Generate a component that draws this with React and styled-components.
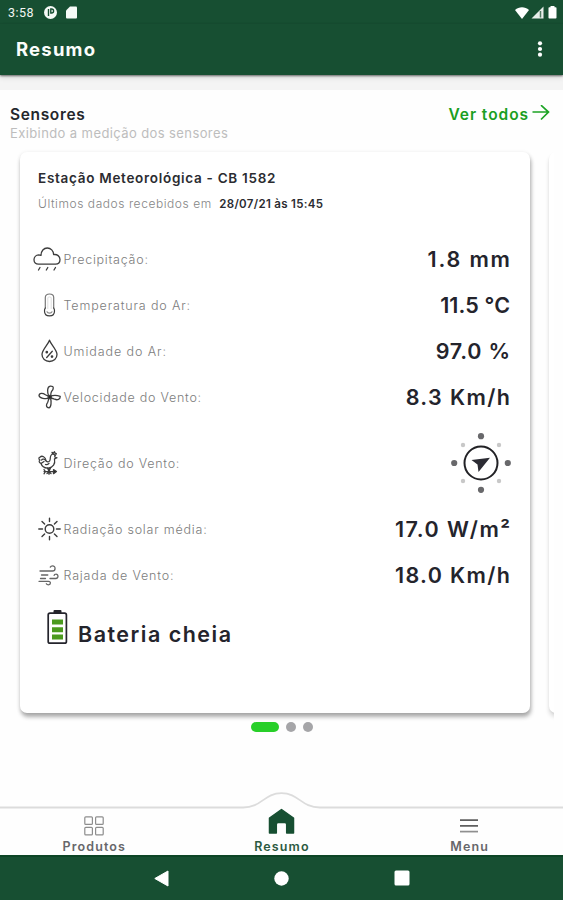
import React from 'react';
import styled, { createGlobalStyle } from 'styled-components';

const GlobalStyle = createGlobalStyle`
  * { box-sizing: border-box; }
  body { margin: 0; background: #fefefe; font-family: Inter, sans-serif; }
  svg { display: block; flex: none; }
`;

const GREEN = '#174f32';

const Screen = styled.div`
  width: 563px;
  height: 900px;
  display: flex;
  flex-direction: column;
  overflow: hidden;
  background: #fefefe;
`;

const StatusBar = styled.div`
  height: 24px;
  flex: none;
  display: flex;
  align-items: center;
  padding: 1px 5px 0 8px;
  background: ${GREEN};
`;

const Clock = styled.span`
  width: 36px;
  color: #f3f7f4;
  font: 400 12.5px/16px Roboto, sans-serif;
  letter-spacing: 0.5px;
`;

const StatusIcons = styled.div`
  display: flex;
  align-items: center;
  gap: ${(p) => p.$gap}px;
  margin-left: ${(p) => (p.$end ? 'auto' : 0)};
`;

const AppBar = styled.header`
  height: 51px;
  flex: none;
  display: flex;
  align-items: center;
  justify-content: space-between;
  padding: 0 20px 1px 16px;
  background: ${GREEN};
  position: relative;
  box-shadow: 0 1px 2px rgba(0, 0, 0, 0.55), 0 3px 5px rgba(0, 0, 0, 0.1);
`;

const PageTitle = styled.h1`
  margin: 0;
  color: #fbfdfb;
  font-size: 18.5px;
  font-weight: 700;
  letter-spacing: 1.2px;
`;

const Strip = styled.div`
  height: 15px;
  flex: none;
  background: #f4f4f4;
`;

const SectionHeader = styled.div`
  display: flex;
  justify-content: space-between;
  height: 55px;
  padding: 15px 13px 0 10px;
`;

const SectionTitle = styled.h2`
  margin: 0;
  color: #25272c;
  font-size: 15.5px;
  line-height: 20px;
  font-weight: 600;
  letter-spacing: 0.65px;
`;

const SectionHint = styled.p`
  margin: 0;
  color: #bdbdbd;
  font-size: 13px;
  line-height: 17px;
  letter-spacing: 0.4px;
`;

const SeeAll = styled.a`
  display: flex;
  align-items: flex-start;
  gap: 3px;
  height: 20px;
  color: #1a9e22;
  font-size: 15.5px;
  line-height: 20px;
  font-weight: 600;
  letter-spacing: 0.95px;
`;

const Carousel = styled.div`
  display: flex;
  gap: 19.5px;
  height: 577px;
  flex: none;
  margin: 0 9px 0 10px;
  padding: 6.5px 0 0 10px;
  overflow: hidden;
`;

const Card = styled.article`
  width: 509.5px;
  height: 561px;
  flex: none;
  display: flex;
  flex-direction: column;
  padding: 16.5px 19.5px 0 13px;
  background: #fff;
  border-radius: 7px;
  box-shadow: ${(p) =>
    p.$peek
      ? '0 4px 4px rgba(0, 0, 0, 0.14), 0 1px 2px rgba(0, 0, 0, 0.05)'
      : '1px 4px 4px rgba(0, 0, 0, 0.3), 0 1px 4px rgba(0, 0, 0, 0.1)'};
`;

const StationName = styled.h3`
  margin: 0 0 7px 5px;
  color: #2b2c31;
  font-size: 13.5px;
  line-height: 20px;
  font-weight: 600;
  letter-spacing: 0.71px;
  white-space: nowrap;
`;

const Updated = styled.p`
  display: flex;
  gap: 7.5px;
  height: 18px;
  margin: 0 0 23px 5px;
  color: #858585;
  font-size: 12px;
  line-height: 18px;
  font-weight: 300;
  letter-spacing: 0.56px;
`;

const UpdatedAt = styled.strong`
  color: #2b2c31;
  font-size: 11.5px;
  font-weight: 600;
  letter-spacing: 0.32px;
`;

const Reading = styled.div`
  display: flex;
  align-items: center;
  height: ${(p) => (p.$tall ? 86 : 46)}px;
`;

const IconSlot = styled.div`
  width: 30.5px;
  flex: none;
  display: flex;
  justify-content: flex-end;
  padding-right: ${(p) => p.$pad}px;
`;

const Label = styled.span`
  color: #7c7c7c;
  font-size: 12.5px;
  font-weight: 300;
  letter-spacing: ${(p) => p.$track}px;
`;

const Value = styled.span`
  margin-left: auto;
  margin-right: ${(p) => -p.$track}px;
  color: #24242c;
  font-size: 21.5px;
  font-weight: 600;
  letter-spacing: ${(p) => p.$track}px;
`;

const CompassSlot = styled.div`
  margin: 0 -1.5px 0 auto;
`;

const Battery = styled.div`
  display: flex;
  align-items: flex-start;
  gap: 10px;
  padding: 12px 0 0 14px;
`;

const BatteryText = styled.span`
  padding-top: 9.5px;
  color: #24242c;
  font-size: 21.5px;
  line-height: 28px;
  font-weight: 600;
  letter-spacing: 1.49px;
`;

const Pager = styled.div`
  display: flex;
  justify-content: center;
  align-items: center;
  gap: 7.5px;
  height: 10px;
`;

const Dot = styled.span`
  width: ${(p) => (p.$active ? 28 : 9.5)}px;
  height: 9.5px;
  border-radius: 5px;
  background: ${(p) => (p.$active ? '#28cf29' : '#a5a5a8')};
`;

const TabBar = styled.nav`
  position: relative;
  height: 49px;
  flex: none;
  display: grid;
  grid-template-columns: repeat(3, 1fr);
  margin-top: auto;
  background: #fefefe;
`;

const TabOutline = styled.svg`
  position: absolute;
  left: 0;
  top: -16px;
`;

const Tab = styled.div`
  position: relative;
  display: flex;
  flex-direction: column;
  align-items: center;
  justify-content: flex-end;
  gap: ${(p) => p.$gap}px;
`;

const TabLabel = styled.span`
  color: ${(p) => (p.$active ? '#2c5a41' : '#67676a')};
  font-size: 12.5px;
  line-height: 16px;
  font-weight: 600;
  letter-spacing: 1.12px;
  margin-right: -1px;
`;

const SystemBar = styled.div`
  height: 45px;
  flex: none;
  display: flex;
  justify-content: center;
  align-items: center;
  gap: 104.5px;
  padding-bottom: 1px;
  background: ${GREEN};
  border-top: 2px solid #0d4526;
`;

const line = { fill: 'none', stroke: '#3c3c3c', strokeLinecap: 'round', strokeLinejoin: 'round' };

const RainIcon = () => (
  <svg width="28" height="24" viewBox="0 0 28 24" {...line} strokeWidth="1.3">
    <path d="M5.500 17.200C2.800 17.200 1 15.400 1 12.800c0-2.700 2-4.800 4.700-4.900.9 0 1.700.2 2.300.5C8 4 10.800 1 14.300 1s6.300 2.800 6.300 6.600c3.600-.6 6.400 1.700 6.400 4.900 0 2.800-1.900 4.700-4.500 4.700z" />
    <path d="m7 20.500-1.500 2.500M14.800 20.500 13.300 23M22.500 20.500 21 23" />
  </svg>
);

const ThermometerIcon = () => (
  <svg width="13" height="24" viewBox="0 0 13 24" {...line} strokeWidth="1.200">
    <path d="M2.300 15V4.500C2.300 2.200 4 1 6.500 1s4.200 1.200 4.200 3.500V15" stroke="#777" />
    <path d="M2.300 15a5.200 5.200 0 0 0-.8 3c0 3 2 4.900 5 4.900s5-1.900 5-4.900a5.200 5.200 0 0 0-.8-3" />
    <path d="M4.800 15.500V4.800c0-1.200 3.400-1.200 3.400 0v10.700" stroke="#c8c8c8" strokeWidth=".6" />
    <path d="M4 18.800c.8 1.700 4.200 1.700 5 0" stroke="#888" />
  </svg>
);

const DropIcon = () => (
  <svg width="17" height="24" viewBox="0 0 17 24" {...line} strokeWidth="1.300">
    <path d="M8.500 1.200C7 5.800 1 10.800 1 15.600c0 4 3.300 6.900 7.500 6.900s7.500-2.900 7.500-6.900c0-4.800-6-9.800-7.500-14.400z" />
    <path d="m11.300 12.300-5.600 6.200" />
    <circle cx="5.800" cy="13.200" r=".7" />
    <circle cx="11" cy="17.600" r=".7" />
  </svg>
);

const FanIcon = () => (
  <svg width="23" height="24" viewBox="0 0 23 24" {...line} strokeWidth="1.300">
    <path d="M10.800 11.500C9.200 7.500 8.800 1.600 12.300 1.100c4.200-.3 3.300 3.400 1.200 5.400-.8 1.500-.8 3-.8 4.500" />
    <path d="M12.300 11.200c3-1 7-.9 9.900.2.200 2.800-2.800 4.100-5.500 2.800-1.300-.7-2.500-1-4.200-1.200" />
    <path d="M12.600 13c.8 3.500.8 9-1.500 9.800-3.500-.2-3-3.500-1.400-5.500.7-1.500.8-2.800 1-4.300" />
    <path d="M11 13.200C7.500 14 1.500 13.500 1 10.700 1.200 7.500 5 7.900 7 9.500c1.200.9 2.500 1.300 4 1.500" />
    <circle cx="11.700" cy="12.100" r="1.700" fill="#222" />
  </svg>
);

const RoosterIcon = () => (
  <svg width="20" height="24" viewBox="0 0 20 24" {...line} strokeWidth="1.250">
    <path d="M8 9.500C7.500 6 4 4.200 2.200 6 .5 6 .5 8.500 2 9c-1.500 1-.8 3 .8 3 1.300 4 4.700 5.300 7.700 5 4.500-.5 7-4 6-9" />
    <path d="M3.500 9C5 7 7 8.500 8 10c1.800 1.500 4 1 4.200-1.700 0-2.800.3-5 2.800-5.300 1.500 0 2.200 1.200 1.700 3L19 6.800 16.500 8M14.500 2.800l-.5-1.500 1.500.7 1-1.300.6 1.500 1.200.5-1 1.800" />
    <path d="M3 12.500 6 10.500M7.500 13.500c1.500.5 2.700-.3 3.500-1.200M9.500 17l1.500 3.500L12.500 17M11 17v6.300M6 20.500h10.500M6 18.500l1.500 2L6 22.800M9 22.500l2-1.500 2 1.500" />
    <path d="m15.500 18.500 3 2-3 2.200z" fill="#222" />
  </svg>
);

const SunIcon = () => (
  <svg width="23" height="24" viewBox="0 0 23 24" {...line} strokeWidth="1.400">
    <circle cx="11.500" cy="12" r="4.300" />
    <path d="M11.500 1.200v3.300M11.500 19.500v3.300M.8 12h3.700M18.500 12h3.700M4 4.500l2.600 2.600M16.400 16.900l2.600 2.600M19 4.500l-2.600 2.600M6.600 16.900 4 19.500" />
  </svg>
);

const GustIcon = () => (
  <svg width="21" height="22" viewBox="0 0 21 22" {...line} stroke="#666" strokeWidth="1.300">
    <path d="M2 7h12.500c3.300 0 3.500-5.200 0-5.200-1.200 0-1.800.5-2.200 1.300" />
    <path d="M3.500 11h6.300M12 14.500h5.800c3 0 2.800-4.600 0-4.400-1 0-1.500.5-1.700 1.300M2.500 14.500h5" />
    <path d="M1 17.300h9.500c2.600 0 2.500 3.600 0 3.600-1.200 0-1.800-.4-2.200-1.100" />
  </svg>
);

const CompassIcon = () => (
  <svg width="62" height="62" viewBox="0 0 62 62">
    <circle cx="31" cy="31" r="16.500" fill="none" stroke="#222226" strokeWidth="2" />
    <g fill="#68686b">
      <circle cx="31" cy="4.200" r="3.100" />
      <circle cx="31" cy="57.800" r="3.100" />
      <circle cx="4.200" cy="31" r="3.100" />
      <circle cx="57.800" cy="31" r="3.100" />
    </g>
    <g fill="#c8c8c8">
      <circle cx="13" cy="13" r="2.200" />
      <circle cx="49" cy="13" r="2.200" />
      <circle cx="13" cy="49" r="2.200" />
      <circle cx="49" cy="49" r="2.200" />
    </g>
    <path d="M21.500 28 40 25.800 28.500 40 27.500 32.500z" fill="#2b2b33" />
  </svg>
);

const BatteryIcon = () => (
  <svg width="21" height="35" viewBox="0 0 21 35">
    <rect x="6.500" y="0" width="8" height="4" rx="1" fill="#24242c" />
    <rect x="1.200" y="3.200" width="18.200" height="30" rx="1.800" fill="#fff" stroke="#24242c" strokeWidth="1.700" />
    <path d="M5 9.500h11v5H5zM5 17.200h11v5H5zM5 24.500h11v5H5z" fill="#4b9a1f" />
  </svg>
);

const readings = [
  { label: 'Precipitação:', track: 0.76, value: '1.8 mm', valueTrack: 1.85, Icon: RainIcon, pad: 3 },
  { label: 'Temperatura do Ar:', track: 0.85, value: '11.5 °C', valueTrack: 0.12, Icon: ThermometerIcon, pad: 7.5 },
  { label: 'Umidade do Ar:', track: 0.92, value: '97.0 %', valueTrack: 0.75, Icon: DropIcon, pad: 6 },
  { label: 'Velocidade do Vento:', track: 0.75, value: '8.3 Km/h', valueTrack: 1.4, Icon: FanIcon, pad: 3 },
  { label: 'Direção do Vento:', track: 0.76, Icon: RoosterIcon, pad: 5.5 },
  { label: 'Radiação solar média:', track: 0.78, value: '17.0 W/m²', valueTrack: 1.45, Icon: SunIcon, pad: 3 },
  { label: 'Rajada de Vento:', track: 0.82, value: '18.0 Km/h', valueTrack: 1.38, Icon: GustIcon, pad: 4.5 },
];

export default function App() {
  return (
    <Screen>
      <GlobalStyle />
      <StatusBar>
        <Clock>3:58</Clock>
        <StatusIcons $gap={9}>
          <svg width="13" height="13" viewBox="0 0 13 13">
            <circle cx="6.500" cy="6.500" r="6.500" fill="#f6faf7" />
            <path d="M4.500 10V3M6.800 3h.8a2 2 0 0 1 0 4h-.8z" fill="none" stroke={GREEN} strokeWidth="1.400" />
          </svg>
          <svg width="11" height="13" viewBox="0 0 11 13">
            <path d="M4 .5h6a1 1 0 0 1 1 1v10a1 1 0 0 1-1 1H1a1 1 0 0 1-1-1v-7z" fill="#f6faf7" />
          </svg>
        </StatusIcons>
        <StatusIcons $end $gap={1.5}>
          <svg width="14" height="12" viewBox="0 0 14 12">
            <path d="M0 3C4-.7 10-.7 14 3L7 12z" fill="#fff" />
          </svg>
          <svg width="13" height="13" viewBox="0 0 13 13">
            <path d="M12.500.5v12H.5z" fill="#e8eeea" />
            <path d="M9.500 5v6.500" stroke="#507a63" strokeWidth="1.500" />
          </svg>
          <svg width="13" height="13" viewBox="0 0 13 13">
            <path d="M5.500 0h4v1.300h1.200a.8.800 0 0 1 .8.800v9.600a.8.800 0 0 1-.8.800H4.300a.8.800 0 0 1-.8-.8V2.100a.8.800 0 0 1 .8-.8h1.200z" fill="#fff" />
          </svg>
        </StatusIcons>
      </StatusBar>
      <AppBar>
        <PageTitle>Resumo</PageTitle>
        <svg width="6" height="18" viewBox="0 0 6 18" fill="#fff">
          <circle cx="3" cy="3.300" r="2.100" />
          <circle cx="3" cy="9" r="2.100" />
          <circle cx="3" cy="14.700" r="2.100" />
        </svg>
      </AppBar>
      <Strip />
      <SectionHeader>
        <div>
          <SectionTitle>Sensores</SectionTitle>
          <SectionHint>Exibindo a medição dos sensores</SectionHint>
        </div>
        <SeeAll>
          Ver todos
          <svg width="18" height="16" viewBox="0 0 18 16" fill="none" stroke="#1ca324" strokeWidth="1.700">
            <path d="M.5 7h16M9 .2 16.500 7 9 14.500" />
          </svg>
        </SeeAll>
      </SectionHeader>
      <Carousel>
        <Card>
          <StationName>Estação Meteorológica - CB 1582</StationName>
          <Updated>
            Últimos dados recebidos em
            <UpdatedAt>28/07/21 às 15:45</UpdatedAt>
          </Updated>
          {readings.map(({ label, track, value, valueTrack, Icon, pad }) => (
            <Reading key={label} $tall={!value}>
              <IconSlot $pad={pad}>
                <Icon />
              </IconSlot>
              <Label $track={track}>{label}</Label>
              {value ? (
                <Value $track={valueTrack}>{value}</Value>
              ) : (
                <CompassSlot>
                  <CompassIcon />
                </CompassSlot>
              )}
            </Reading>
          ))}
          <Battery>
            <BatteryIcon />
            <BatteryText>Bateria cheia</BatteryText>
          </Battery>
        </Card>
        <Card $peek />
      </Carousel>
      <Pager>
        <Dot $active />
        <Dot />
        <Dot />
      </Pager>
      <TabBar>
        <TabOutline width="563" height="20" viewBox="0 0 563 20">
          <path
            d="M0 17.500H243C262 17.500 264 3.200 281.500 3.200S301 17.500 320 17.500H563"
            fill="#fefefe"
            stroke="#dcdcdc"
            strokeWidth="1.800"
          />
        </TabOutline>
        <Tab $gap={3}>
          <svg width="20" height="20" viewBox="0 0 20 20" fill="none" stroke="#8d8d8d" strokeWidth="1.200">
            <rect x=".8" y=".8" width="7.600" height="7.600" rx="1" />
            <rect x="11.600" y=".8" width="7.600" height="7.600" rx="1" />
            <rect x=".8" y="11.300" width="7.600" height="7.600" rx="1" />
            <rect x="11.600" y="11.300" width="7.600" height="7.600" rx="1" />
          </svg>
          <TabLabel>Produtos</TabLabel>
        </Tab>
        <Tab $gap={4}>
          <svg width="27" height="27" viewBox="0 0 27 27">
            <path
              d="M13.500 1.500 25.500 10v15H18.700v-8.500a2 2 0 0 0-2-2h-6.400a2 2 0 0 0-2 2V25H1.500V10z"
              fill={GREEN}
              stroke={GREEN}
              strokeWidth="1.500"
              strokeLinejoin="round"
            />
          </svg>
          <TabLabel $active>Resumo</TabLabel>
        </Tab>
        <Tab $gap={6}>
          <svg width="18" height="14" viewBox="0 0 18 14" strokeWidth="1.700">
            <path d="M0 1.200h18M0 6.800h18" stroke="#5f5f5f" />
            <path d="M0 12.600h18" stroke="#8f8f8f" />
          </svg>
          <TabLabel>Menu</TabLabel>
        </Tab>
      </TabBar>
      <SystemBar>
        <svg width="16" height="17" viewBox="0 0 16 17">
          <path d="M14 1v15L.8 8.500z" fill="#fff" stroke="#fff" strokeLinejoin="round" />
        </svg>
        <svg width="15" height="15" viewBox="0 0 15 15">
          <circle cx="7.500" cy="7.500" r="7.200" fill="#fff" />
        </svg>
        <svg width="16" height="16" viewBox="0 0 16 16">
          <rect x=".5" y=".5" width="15" height="15" rx="1.500" fill="#fff" />
        </svg>
      </SystemBar>
    </Screen>
  );
}
